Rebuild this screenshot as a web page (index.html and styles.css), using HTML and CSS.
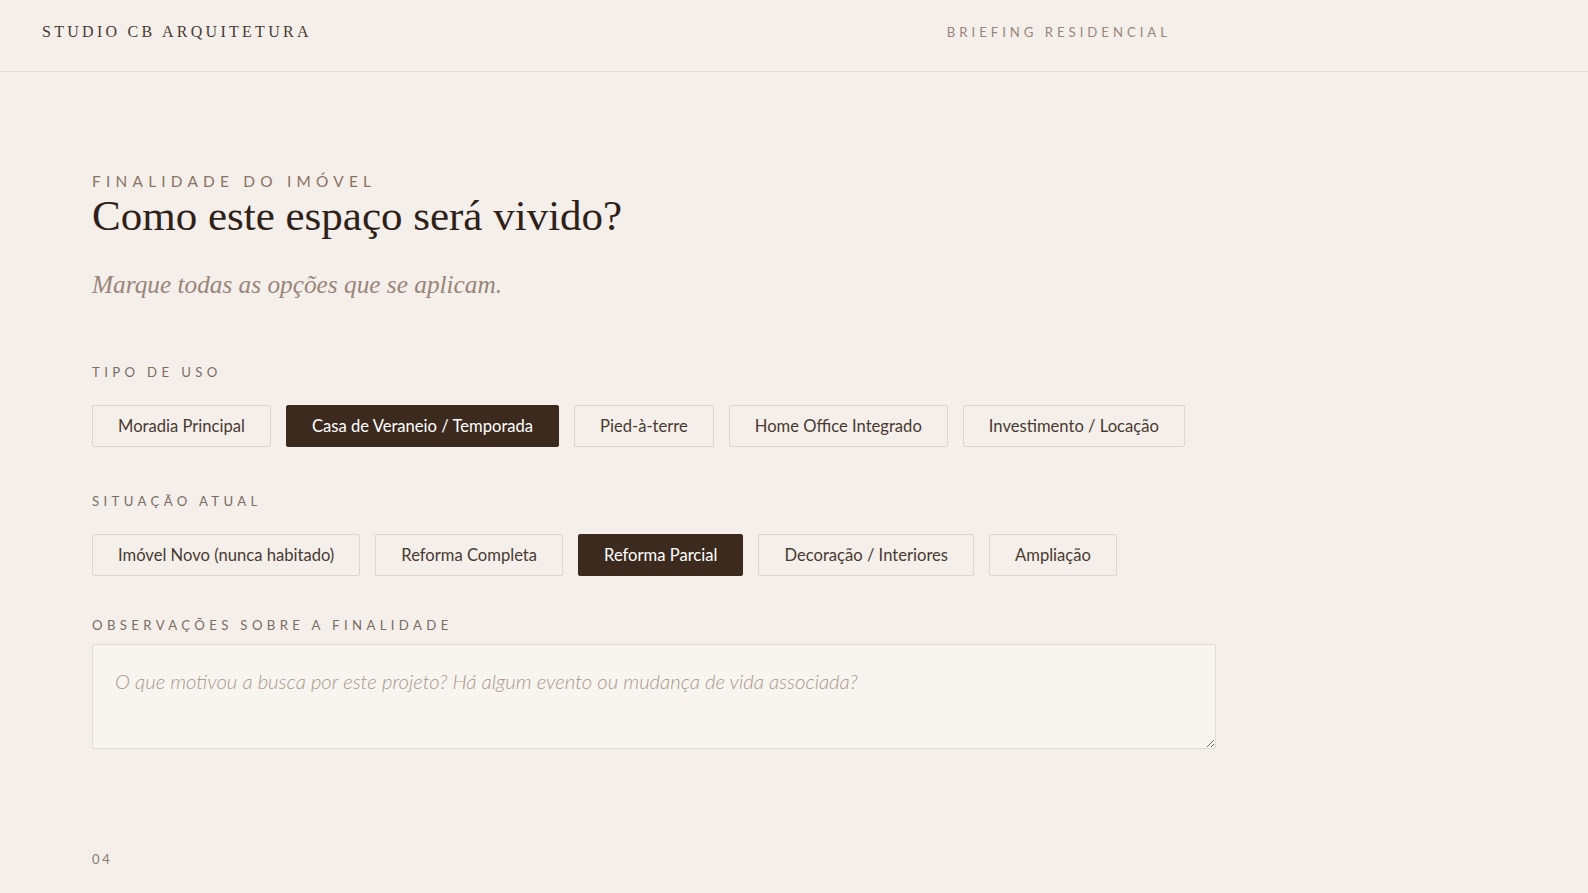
FILE: index.html
```html
<!DOCTYPE html>
<html lang="pt-BR">
<head>
  <meta charset="UTF-8">
  <title>Studio CB Arquitetura — Briefing Residencial</title>
  <link rel="stylesheet" href="styles.css">
</head>
<body>
  <header class="topbar">
    <div class="brand">STUDIO CB ARQUITETURA</div>
    <div class="doc-title">BRIEFING RESIDENCIAL</div>
  </header>

  <main class="step">
    <p class="eyebrow">Finalidade do Imóvel</p>
    <h1 class="step-title">Como este espaço será vivido?</h1>
    <p class="step-hint">Marque todas as opções que se aplicam.</p>

    <section class="field">
      <h3 class="field-label">Tipo de Uso</h3>
      <div class="chips">
        <button class="chip">Moradia Principal</button>
        <button class="chip active">Casa de Veraneio / Temporada</button>
        <button class="chip">Pied-à-terre</button>
        <button class="chip">Home Office Integrado</button>
        <button class="chip">Investimento / Locação</button>
      </div>
    </section>

    <section class="field">
      <h3 class="field-label">Situação Atual</h3>
      <div class="chips">
        <button class="chip">Imóvel Novo (nunca habitado)</button>
        <button class="chip">Reforma Completa</button>
        <button class="chip active">Reforma Parcial</button>
        <button class="chip">Decoração / Interiores</button>
        <button class="chip">Ampliação</button>
      </div>
    </section>

    <section class="field notes">
      <h3 class="field-label">Observações sobre a Finalidade</h3>
      <textarea placeholder="O que motivou a busca por este projeto? Há algum evento ou mudança de vida associada?"></textarea>
    </section>

    <div class="page-num">04</div>
  </main>
</body>
</html>
```

FILE: styles.css
```css
* {
  box-sizing: border-box;
}

body {
  margin: 0;
  background: #f4efeb;
  color: #3d2a1f;
  font-family: 'Lato', sans-serif;
}

.topbar {
  display: flex;
  justify-content: space-between;
  align-items: center;
  height: 72px;
  padding: 0 417px 7px 42px;
  border-bottom: 1px solid #e4ddd6;
}

.brand {
  font-family: 'Liberation Serif', serif;
  font-size: 16px;
  letter-spacing: 0.205em;
  color: #4a3a30;
}

.doc-title {
  font-size: 13.2px;
  letter-spacing: 0.3em;
  color: #9a8678;
}

.step {
  padding: 100px 92px 0;
  max-width: 1308px;
}

.eyebrow {
  margin: 0;
  font-size: 15.4px;
  letter-spacing: 0.34em;
  text-transform: uppercase;
  color: #8c7260;
}

.step-title {
  margin: 0;
  font-family: 'Liberation Serif', serif;
  font-weight: 400;
  font-size: 43px;
  line-height: 1.2;
  color: #2f2118;
}

.step-hint {
  margin: 28px 0 0;
  font-family: 'Liberation Serif', serif;
  font-style: italic;
  font-size: 25.3px;
  color: #9a8578;
}

.field {
  margin-top: 65px;
}

.field + .field {
  margin-top: 46px;
}

.field-label {
  margin: 0 0 25px;
  font-size: 13.2px;
  font-weight: 400;
  letter-spacing: 0.33em;
  text-transform: uppercase;
  color: #7d6c61;
}

.chips {
  display: flex;
  flex-wrap: wrap;
  gap: 15px;
}

.chip {
  height: 42px;
  padding: 0 25px;
  background: transparent;
  border: 1px solid #ddd5ce;
  border-radius: 2px;
  font-family: 'Lato', sans-serif;
  font-size: 16.6px;
  color: #4a3a30;
  cursor: pointer;
}

.chip.active {
  background: #3d2a1f;
  border-color: #3d2a1f;
  color: #fff;
}

.field.notes {
  margin-top: 41px;
}

.notes .field-label {
  margin-bottom: 11px;
}

.notes textarea {
  display: block;
  width: 100%;
  height: 105px;
  padding: 24px 22px;
  background: #f8f5f0;
  border: 1px solid #e2dbd4;
  border-radius: 2px;
  font-family: 'Lato', sans-serif;
  font-size: 20.3px;
  font-weight: 300;
  font-style: italic;
  color: #3d2a1f;
}

.notes textarea::placeholder {
  color: #a8978b;
}

.page-num {
  margin-top: 102px;
  font-size: 13px;
  letter-spacing: 0.2em;
  color: #8c7a6e;
}
```
